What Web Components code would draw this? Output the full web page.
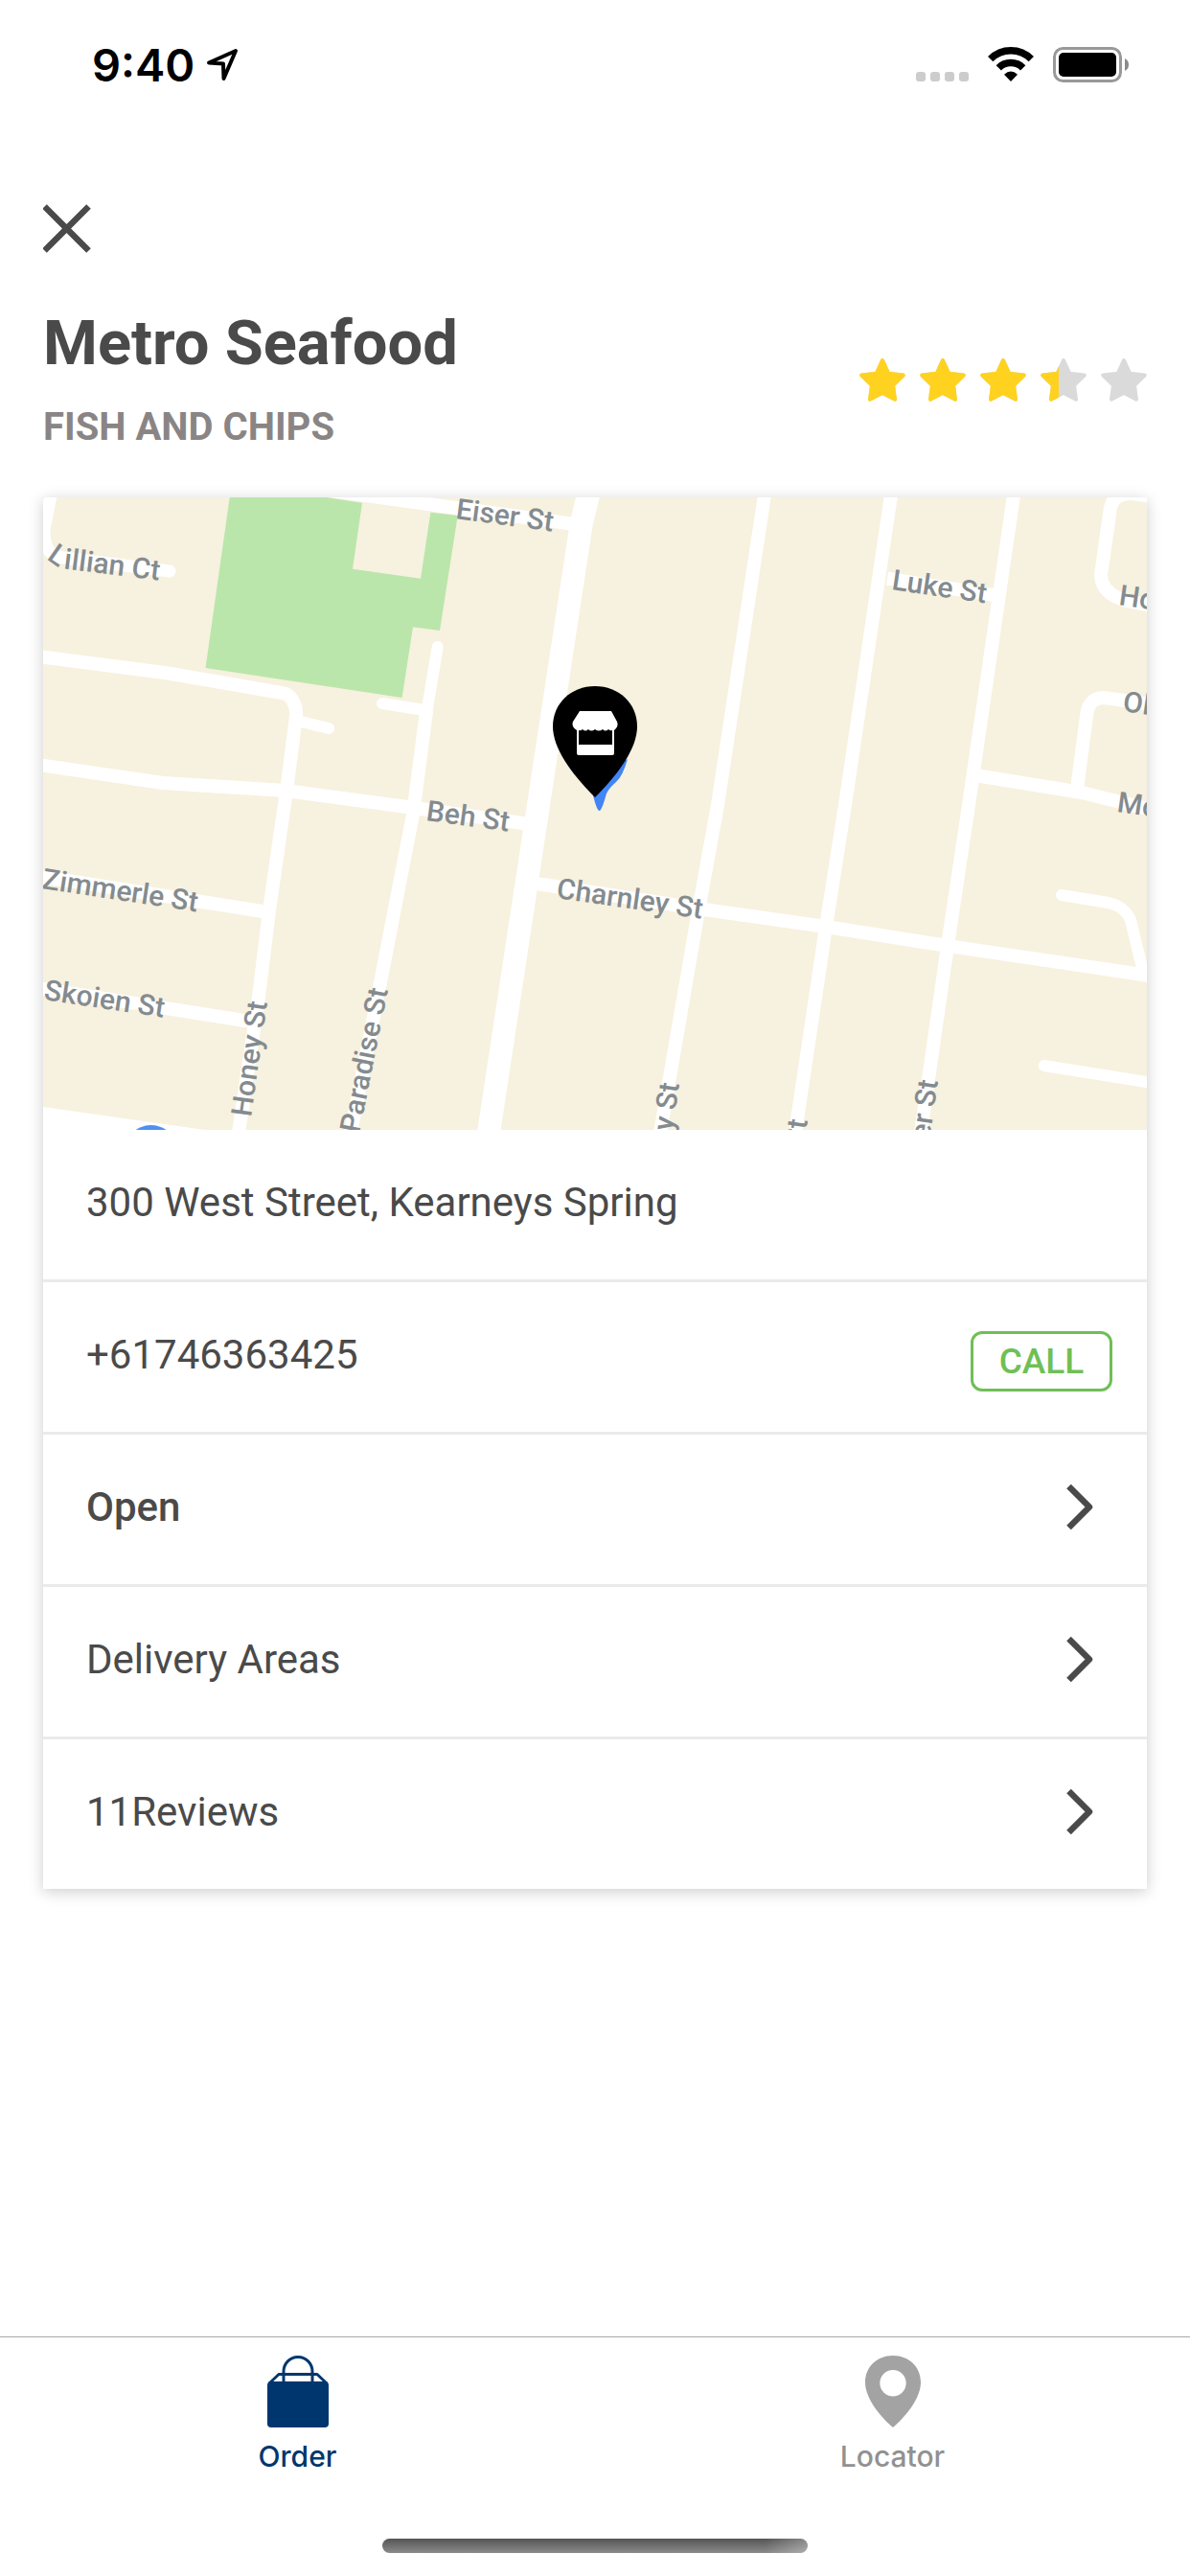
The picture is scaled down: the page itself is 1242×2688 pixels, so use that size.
<!DOCTYPE html>
<html lang="en">
<head>
<meta charset="utf-8">
<meta name="viewport" content="width=device-width, initial-scale=1">
<title>Metro Seafood</title>
<style>
  body { margin: 0; background: #fff; font-family: Roboto, "Liberation Sans", sans-serif; color: #4a4a4a; }
</style>
</head>
<body>
<venue-page>
  <status-bar slot="status">9:40</status-bar>
  <venue-header>
    <span slot="name">Metro Seafood</span>
    <span slot="cuisine">FISH AND CHIPS</span>
    <star-rating slot="rating" value="3.4"></star-rating>
  </venue-header>
  <info-card>
    <street-map slot="media"></street-map>
    <info-row>300 West Street, Kearneys Spring</info-row>
    <info-row>+61746363425<call-button slot="action">CALL</call-button></info-row>
    <info-row link strong>Open</info-row>
    <info-row link>Delivery Areas</info-row>
    <info-row link>11Reviews</info-row>
  </info-card>
  <tab-bar slot="tabs">
    <tab-item current>
      <svg slot="icon" width="64" height="75" viewBox="0 0 64 75" fill="none" stroke="currentColor" stroke-width="3" aria-hidden="true">
        <path d="M17 28V16.5A15 15 0 0 1 47 16.5V28"/>
        <path d="M2 29L12 19.5H52L62 29" stroke-linejoin="round"/>
        <rect y="27" width="64" height="48" rx="4" fill="currentColor" stroke="none"/>
      </svg>Order</tab-item>
    <tab-item>
      <svg slot="icon" width="58" height="75" viewBox="0 0 58 75" aria-hidden="true">
        <path fill="#a3a3a3" fill-rule="evenodd" d="M29 75C17 65 0 45 0 28C0 12 12 0 29 0S58 12 58 28C58 45 41 65 29 75ZM29 15A13.7 13.7 0 1 0 29 42.4A13.7 13.7 0 1 0 29 15Z"/>
      </svg>Locator</tab-item>
  </tab-bar>
</venue-page>

<script>
const define = (name, html, setup) => {
  const template = document.createElement('template');
  template.innerHTML = html;
  customElements.define(name, class extends HTMLElement {
    constructor() {
      super();
      this.attachShadow({ mode: 'open' }).append(template.content.cloneNode(true));
    }
    connectedCallback() { if (setup) setup(this, this.shadowRoot); }
  });
};

define('venue-page', `
  <style>
    :host { display: flex; flex-direction: column; min-height: 100vh; }
    main { flex: 1; display: flex; flex-direction: column; padding: 0 45px; }
    nav { padding: 78px 0 45px; display: flex; }
    button { display: block; margin: 0; padding: 0; border: 0; background: none; color: inherit; }
    svg { display: block; }
  </style>
  <slot name="status"></slot>
  <main>
    <nav><button type="button" aria-label="Close">
      <svg width="51" height="51" viewBox="1 0 51 51" stroke="currentColor" stroke-width="6.5"><path d="M2.500 2.500L48.500 48.500M48.500 2.500L2.500 48.500"/></svg>
    </button></nav>
    <slot></slot>
  </main>
  <slot name="tabs"></slot>`);

define('status-bar', `
  <style>
    :host { display: flex; justify-content: space-between; align-items: center; height: 135px; padding: 0 64px 0 96px; box-sizing: border-box; color: #000; }
    .time, .signal { display: flex; align-items: center; }
    .time { gap: 12px; font: 600 47px/60px Inter, sans-serif; }
    .signal { gap: 20px; }
    svg { display: block; }
  </style>
  <div class="time"><slot></slot>
    <svg width="34" height="36" viewBox="0 0 34 36" fill="none" stroke="#000" stroke-width="4" stroke-linejoin="round"><path d="M31 3L3 15.500L18 16.500L18.500 32Z"/></svg>
  </div>
  <div class="signal">
    <svg width="55" height="37" viewBox="0 0 55 37" fill="#ccc"><rect y="26" width="10" height="10" rx="3"/><rect x="15" y="26" width="10" height="10" rx="3"/><rect x="30" y="26" width="10" height="10" rx="3"/><rect x="45" y="26" width="10" height="10" rx="3"/></svg>
    <svg width="48" height="37" viewBox="0 0 48 37"><g fill="none" stroke="#000" stroke-width="7.500"><path d="M2.700 12.700A30 30 0 0 1 45.300 12.700"/><path d="M11.300 21.800A18 18 0 0 1 36.700 21.800"/></g><path d="M24 36L17 28.800Q24 22 31 28.800Z"/></svg>
    <svg width="79" height="37" viewBox="0 0 79 37"><rect x="1.500" y="1.500" width="69" height="34" rx="9" fill="none" stroke="#999" stroke-width="3"/><rect x="6" y="6" width="60" height="25" rx="5"/><path d="M75 12Q79 14 79 18.500T75 25Z" fill="#8a8a8a"/></svg>
  </div>`);

define('venue-header', `
  <style>
    :host { display: flex; justify-content: space-between; align-items: center; padding-bottom: 35px; }
    h1, p { margin: 0; font-weight: 700; }
    h1 { font-size: 65px; line-height: 99px; }
    p { font-size: 40px; line-height: 76px; color: #8a8584; }
  </style>
  <header><h1><slot name="name"></slot></h1><p><slot name="cuisine"></slot></p></header>
  <slot name="rating"></slot>`);

define('star-rating', `
  <style>
    :host { display: flex; gap: 15px; }
    svg { display: block; }
  </style>`, (host, root) => {
  const value = Number(host.getAttribute('value'));
  const star = 'M24 2L30.300 15.800L45.700 17.500L35 28L37 42.700L24 36L11 42.700L13 28L2.300 17.500L17.700 15.800Z';
  host.setAttribute('role', 'img');
  host.setAttribute('aria-label', value + ' out of 5');
  for (let i = 0; i < 5; i++) {
    const fill = Math.max(0, Math.min(1, value - i));
    root.innerHTML += `<svg width="48" height="45" viewBox="0 0 48 45" stroke-width="4" stroke-linejoin="round">
      <clipPath id="c${i}"><rect width="${Math.round(fill * 48)}" height="45"/></clipPath>
      <path d="${star}" fill="#dadada" stroke="#dadada"/>
      <path d="${star}" fill="#ffd21f" stroke="#ffd21f" clip-path="url(#c${i})"/></svg>`;
  }
});

define('info-card', `
  <style>
    :host { display: block; background: #fff; box-shadow: 0 3px 15px rgba(0, 0, 0, .2); }
  </style>
  <slot name="media"></slot><slot></slot>`);

define('info-row', `
  <style>
    :host { display: block; border-bottom: 3px solid #eaeaea; }
    :host(:last-of-type) { border-bottom: 0; }
    .row { display: flex; justify-content: space-between; align-items: center; box-sizing: border-box; width: 100%; height: 156px; padding: 0 36px 4px 45px;
      font: 400 42px/54px Roboto, "Liberation Sans", sans-serif; color: inherit; background: none; border: 0; text-align: left; }
    :host([strong]) .row { font-weight: 500; }
    svg { display: block; }
  </style>`, (host, root) => {
  root.innerHTML += host.hasAttribute('link')
    ? `<button type="button" class="row"><span><slot></slot></span>
        <svg width="60" height="60" viewBox="0 0 60 60" fill="none" stroke="currentColor" stroke-width="6.500"><path d="M14.500 8L36 29.500L14.500 51" stroke-linejoin="round"/></svg></button>`
    : `<div class="row"><span><slot></slot></span><slot name="action"></slot></div>`;
});

define('call-button', `
  <style>
    :host { display: block; padding-top: 13px; }
    button { display: block; box-sizing: border-box; min-width: 148px; height: 63px; margin: 0; padding: 0 24px; border: 3px solid #6fbf57; border-radius: 12px;
      background: none; color: #6fbf57; font: 500 37px/57px Roboto, "Liberation Sans", sans-serif; }
  </style>
  <button type="button"><slot></slot></button>`);

define('street-map', `
  <style>
    :host { display: block; }
    svg { display: block; width: 100%; height: 660px; background: #f7f1df; }
    text { font: 500 30px Roboto, "Liberation Sans", sans-serif; fill: #848b8f; }
  </style>
  <svg viewBox="45 519 1152 660" preserveAspectRatio="xMidYMid slice">
    <path fill="#bae6ab" d="M239.700 519L214.500 697L419.600 728L431 654.300L459 658L477.700 538L449.400 534.700L439 603.700L368 593.700L378 524.700L334 518Z"/>
    <path fill="#fff" d="M45 1155L214 1179H45Z"/>
    <g fill="none" stroke="#fff" stroke-width="14" stroke-linejoin="round">
      <path d="M330 510L600 547"/>
      <path d="M54 512L46 553C46 575 54 580 66 582L177 596" stroke-linecap="round" stroke-width="13"/>
      <path d="M618 500L607 545L562 840L510 1182" stroke-width="24"/>
      <path d="M40 685L172 702L294 723Q302 724 306 732T309 747L300 818L281 950L270 1040L249 1182"/>
      <path d="M40 798L170 817L298 825L432 843L560 861"/>
      <path d="M445 742L431 850L395.500 1033L366 1182"/>
      <path d="M456.700 675L445 745M399 734L446 741.500M312 752.500L343 760" stroke-width="12" stroke-linecap="round"/>
      <path d="M40 914L280 952M40 1031L262 1066M560 922L735 949L862 967L989 987L1200 1018"/>
      <path d="M799 510L749 840L729 950L689 1182M931 510L882 840L862 967L830 1182M1059 510L1011 840L989 987L961 1182"/>
      <path d="M926 603.700L1037 621"/>
      <path d="M1202 518L1182 515Q1161 514 1158.500 533L1149 600Q1150 620 1176 627L1202 632"/>
      <path d="M1202 735L1152 728Q1136 728 1134 747L1124 824M1018 809L1129 827L1202 845"/>
      <path d="M1108 934L1157 942Q1174 946 1180 960L1192 1010M1089.600 1112L1202 1130" stroke-width="12" stroke-linecap="round"/>
    </g>
    <circle cx="157.600" cy="1202" r="28" fill="#4f90f0"/>
    <text transform="translate(475 541) rotate(7.600)">Eiser St</text>
    <text transform="translate(48 583) rotate(7)" rotate="28 0" dx="0 3" dy="0 8">Lillian Ct</text>
    <text transform="translate(444 856) rotate(7.600)">Beh St</text>
    <text transform="translate(930 615) rotate(8.300)">Luke St</text>
    <text transform="translate(580 937) rotate(8.100)">Charnley St</text>
    <text transform="translate(43 927) rotate(8.600)">Zimmerle St</text>
    <text transform="translate(45 1043) rotate(8.500)">Skoien St</text>
    <text transform="translate(1167 631) rotate(8)">Ho</text>
    <text transform="translate(1171 742) rotate(8)">Ol</text>
    <text transform="translate(1165 847) rotate(8)">Mo</text>
    <text transform="translate(262 1166) rotate(-82)">Honey St</text>
    <text transform="translate(375 1183) rotate(-78.700)">Paradise St</text>
    <text transform="translate(709 1131) rotate(-82)" text-anchor="end">y St</text>
    <text transform="translate(843 1169) rotate(-82)" text-anchor="end">St</text>
    <text transform="translate(979 1128) rotate(-82)" text-anchor="end">er St</text>
    <path fill="#4285f4" d="M619 830Q623 846 625.500 846T633 828Q636 822 643 816T655 792L640 800Z"/>
    <path d="M621 832C600 811 577 783 577 758C577 734 596 716 621 716S665 734 665 758C665 783 642 811 621 832Z"/>
    <path fill="#fff" d="M605 742H638L644 753Q646 758 641 762V786Q641 788 639 788H604Q602 788 602 786V762Q596 758 598 753Z"/>
    <path d="M604 762Q606 763 608 761Q611 764 614 761Q617 764 621 761Q625 764 629 761Q632 764 635 761Q637 763 639 762V777H604Z"/>
  </svg>`);

define('tab-bar', `
  <style>
    :host { display: block; border-top: 1px solid #a9a9a9; height: 249px; box-sizing: content-box; }
    nav { display: flex; height: 210px; }
    .home { width: 444px; height: 15px; margin: 0 auto; border-radius: 8px;
      background: linear-gradient(90deg, rgba(255, 255, 255, 0) 90%, rgba(255, 255, 255, .3)), linear-gradient(#555, #8a8a8a); }
  </style>
  <nav><slot></slot></nav><div class="home"></div>`);

define('tab-item', `
  <style>
    :host { display: block; flex: 1; color: #919191; }
    :host([current]) { color: #00366e; }
    a { display: flex; flex-direction: column; align-items: center; gap: 12px; padding-top: 19px; color: inherit; text-decoration: none; font: 500 30px/36px Inter, sans-serif; }
    ::slotted(svg) { display: block; }
  </style>
  <a href="#"><slot name="icon"></slot><span><slot></slot></span></a>`);
</script>
</body>
</html>
